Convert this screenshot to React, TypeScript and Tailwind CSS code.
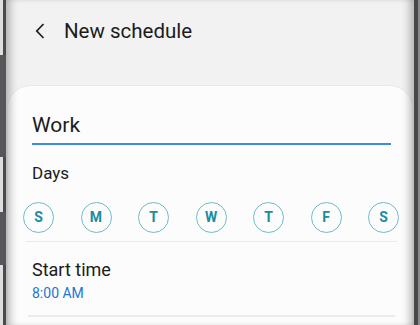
import React from "react";

const days = ["S", "M", "T", "W", "T", "F", "S"];

function LeftFrame() {
  const split = "flex w-full";
  return (
    <div className="flex w-[6px] shrink-0 flex-col">
      <div className={`${split} h-[55px]`}>
        <div className="w-[3px] bg-[#dedede]" />
        <div className="w-[3px] bg-[#4a4a4c]" />
      </div>
      <div className="h-[102px] w-full bg-[#56575a]" />
      <div className={`${split} h-[55px]`}>
        <div className="w-[3px] bg-[#dedede]" />
        <div className="w-[3px] bg-[#4a4a4c]" />
      </div>
      <div className="h-[53px] w-full bg-[#56575a]" />
      <div className={`${split} flex-1`}>
        <div className="w-[3px] bg-[#dedede]" />
        <div className="w-[3px] bg-[#4a4a4c]" />
      </div>
    </div>
  );
}

function RightFrame() {
  return (
    <div className="flex w-[6px] shrink-0">
      <div className="w-[4px] bg-[#48484a]" />
      <div className="w-[2px] bg-[#8a8a8c]" />
    </div>
  );
}

export default function App() {
  return (
    <div
      className="flex h-[325px] w-[420px] overflow-hidden bg-[#f2f2f2]"
      style={{ fontFamily: "Roboto, 'Noto Sans', sans-serif" }}
    >
      <LeftFrame />
      <div className="relative flex flex-1 flex-col">
        {/* header */}
        <div className="flex h-[86px] shrink-0 items-start pt-[19px]">
          <svg
            className="ml-[29px] mt-[4px] h-[16px] w-[10px]"
            viewBox="0 0 10 16"
            fill="none"
            stroke="#222"
            strokeWidth="1.8"
          >
            <path d="M8.5 1 L1.8 8 L8.5 15" />
          </svg>
          <span className="ml-[19px] text-[20.5px] leading-[24px] text-[#1c1c1c]">
            New schedule
          </span>
        </div>
        {/* card */}
        <div className="mx-[2px] flex flex-1 flex-col rounded-t-[22px] bg-[#fcfcfc] shadow-[0_-1px_0_#e8e8e8]">
          <div className="ml-[24px] mr-[21px] pt-[27px]">
            <div className="text-[21px] leading-[24px] text-[#1b1b1b]">Work</div>
            <div className="mt-[6px] h-[1.5px] bg-[#3b8de3]" />
            <div className="mt-[18px] text-[17px] leading-[20px] text-[#1b1b1b]">
              Days
            </div>
          </div>
          <div className="ml-[15px] mr-[13px] mt-[19px] flex justify-between">
            {days.map((d, i) => (
              <div
                key={i}
                className="flex h-[31px] w-[31px] items-center justify-center rounded-full border border-[#6fbcc7] text-[14px] font-bold text-[#1a8c9e]"
              >
                {d}
              </div>
            ))}
          </div>
          <div className="ml-[18px] mr-[15px] mt-[8px] h-[1.5px] bg-[#ebebeb]" />
          <div className="ml-[24px] pt-[17px]">
            <div className="text-[18px] leading-[21px] text-[#1b1b1b]">Start time</div>
            <div className="mt-[5px] text-[14px] leading-[16px] text-[#1f74d6]">
              8:00 AM
            </div>
          </div>
          <div className="ml-[20px] mr-[17px] mt-[14px] h-[1.5px] bg-[#ebebeb]" />
        </div>
        {/* edge shadows */}
        <div className="pointer-events-none absolute inset-0 shadow-[inset_9px_0_9px_-5px_rgba(0,0,0,0.28),inset_-9px_0_9px_-5px_rgba(0,0,0,0.28)]" />
      </div>
      <RightFrame />
    </div>
  );
}
